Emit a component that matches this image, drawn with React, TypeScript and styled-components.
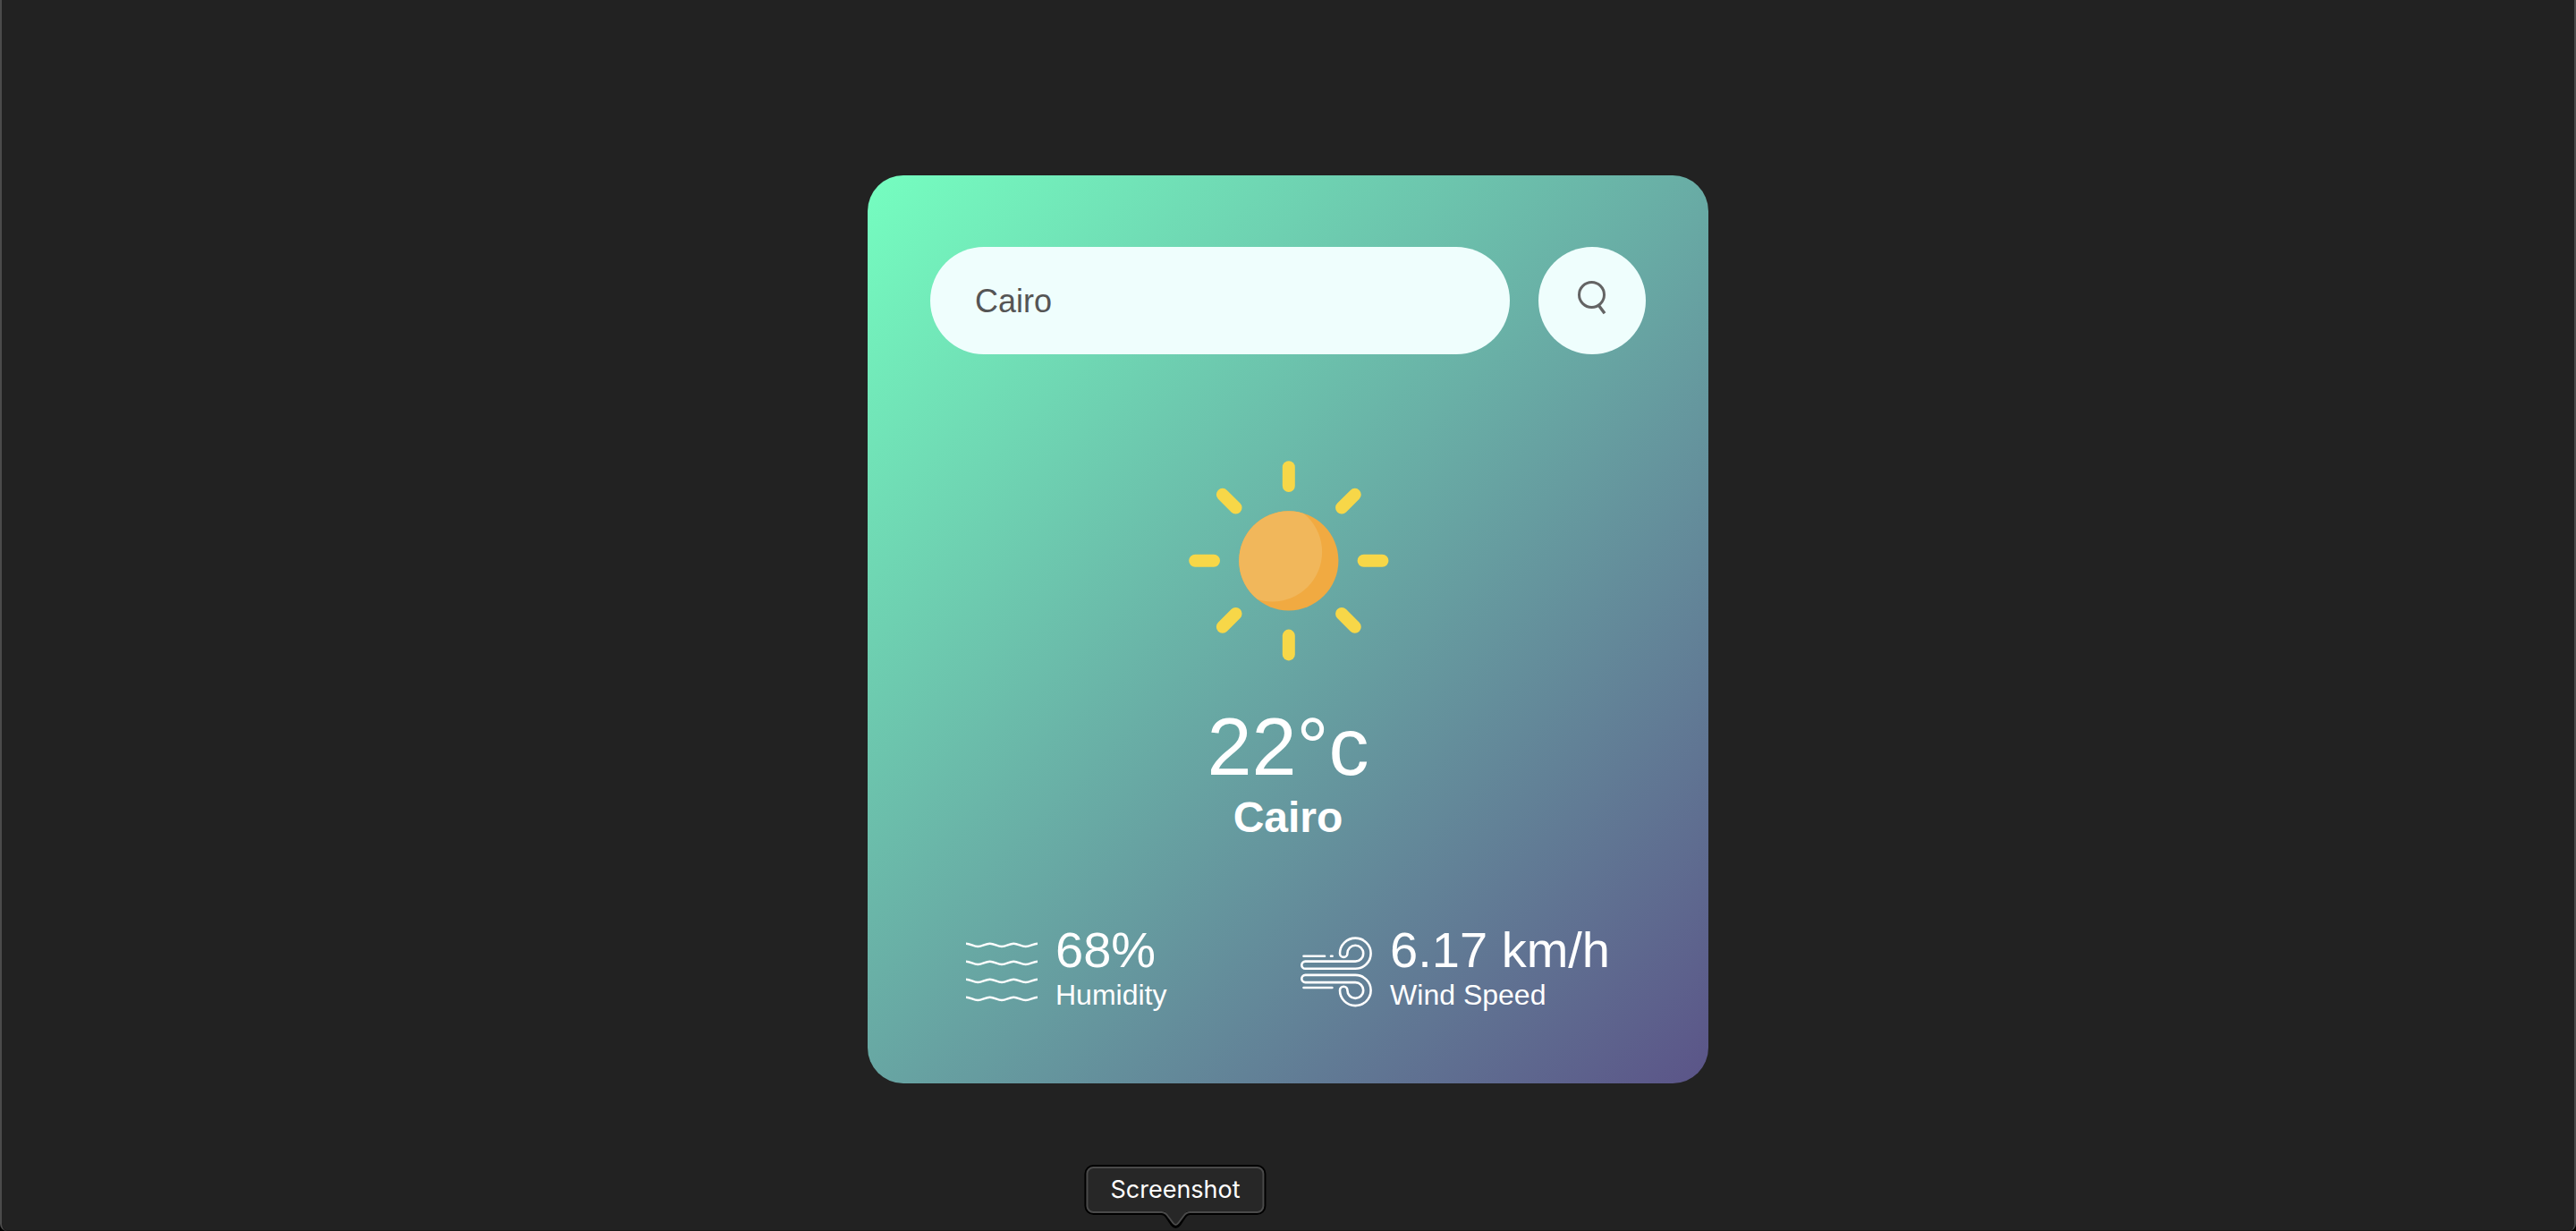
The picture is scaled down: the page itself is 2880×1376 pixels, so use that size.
import React, { useState } from "react";
import styled, { createGlobalStyle } from "styled-components";

const GlobalStyle = createGlobalStyle`
  * {
    margin: 0;
    padding: 0;
    box-sizing: border-box;
  }
  body {
    background: #000;
    font-family: Helvetica, "Liberation Sans", Arial, sans-serif;
  }
`;

const Page = styled.main`
  position: relative;
  min-height: 100vh;
  padding: 196px 20px 160px;
  background: #222;
  border: solid #4b4b4b;
  border-width: 0 2px;
  border-radius: 0 0 8px 8px;
  box-shadow: inset 0 -1px 0 #1b1819;
  overflow: hidden;
`;

const Card = styled.section`
  width: 100%;
  max-width: 940px;
  margin: 0 auto;
  padding: 80px 70px;
  border-radius: 40px;
  background: linear-gradient(135deg, #75fec0, #5b5488);
  color: #fff;
  text-align: center;
`;

const SearchForm = styled.form`
  display: flex;
  align-items: center;
  gap: 32px;
`;

const SearchInput = styled.input`
  flex: 1;
  min-width: 0;
  height: 120px;
  padding: 2px 50px 0;
  border: 0;
  outline: 0;
  border-radius: 60px;
  background: #effefd;
  color: #555;
  font: 36px Helvetica, "Liberation Sans", Arial, sans-serif;
`;

const SearchButton = styled.button`
  display: flex;
  align-items: center;
  justify-content: center;
  flex: none;
  width: 120px;
  height: 120px;
  border: 0;
  border-radius: 50%;
  background: #effefd;
  cursor: pointer;
`;

const Weather = styled.div`
  display: flex;
  flex-direction: column;
  align-items: center;
  padding-top: 60px;
`;

const Temperature = styled.h1`
  font-size: 90px;
  line-height: 102px;
  font-weight: 400;
`;

const City = styled.h2`
  font-size: 48px;
  line-height: 56px;
  font-weight: 700;
`;

const Details = styled.div`
  display: flex;
  align-items: center;
  justify-content: space-between;
  margin-top: 88px;
  padding: 0 40px;
`;

const Detail = styled.div`
  display: flex;
  align-items: flex-end;
  gap: 20px;
  text-align: left;
`;

const DetailIcon = styled.svg`
  flex: none;
  width: 80px;
  height: 80px;
  margin-bottom: 4px;
  fill: none;
  stroke: #fff;
  stroke-linecap: round;
`;

const DetailValue = styled.p`
  font-size: 56px;
  line-height: 64px;
`;

const DetailLabel = styled.p`
  font-size: 32px;
  line-height: 37px;
`;

const Tooltip = styled.div`
  position: absolute;
  left: calc(50% - 126px);
  bottom: 20px;
  transform: translateX(-50%);
  padding: 9px 25px;
  border: 2px solid #4a4a4a;
  border-radius: 8px;
  box-shadow: 0 0 0 2px #000;
  background: #272727;
  color: #fff;
  font: 27px/30px Inter, "Liberation Sans", sans-serif;
`;

const TooltipArrow = styled.svg`
  position: absolute;
  left: 50%;
  top: 100%;
  width: 36px;
  height: 20px;
  margin-left: -18px;
`;

const RAYS = [0, 45, 90, 135, 180, 225, 270, 315];
const WAVES = [7.7, 27.7, 47.7, 67.7];

const SearchIcon = () => (
  <svg width="32" height="44" viewBox="0 0 32 44" fill="none" stroke="#646464" strokeWidth="3" aria-hidden="true">
    <circle cx="15.5" cy="15.5" r="14" />
    <path d="M23.3 27.3L30 36.3" strokeWidth="3.4" />
  </svg>
);

const SunIcon = () => (
  <svg width="340" height="328" viewBox="0 0 340 328" role="img" aria-label="Clear">
    <defs>
      <clipPath id="sun-disc">
        <circle cx="170.8" cy="170.8" r="55.6" />
      </clipPath>
    </defs>
    <circle cx="170.8" cy="170.8" r="55.6" fill="#f1aa41" />
    <circle cx="152.5" cy="161" r="55.6" fill="#f1b75b" clipPath="url(#sun-disc)" />
    <g stroke="#f7d748" strokeWidth="14" strokeLinecap="round">
      {RAYS.map((angle) => (
        <path key={angle} d="M170.8 66.2V87" transform={`rotate(${angle} 170.8 170.8)`} />
      ))}
    </g>
  </svg>
);

const HumidityIcon = () => (
  <DetailIcon viewBox="0 0 80 80" strokeWidth="2.3" aria-hidden="true">
    {WAVES.map((y) => (
      <path
        key={y}
        strokeWidth="2.5"
        d={`M0 ${y}c4.9 0 8.5 3.3 13.3 3.3s8.5-3.3 13.4-3.3 8.5 3.3 13.3 3.3 8.5-3.3 13.3-3.3 8.5 3.3 13.4 3.3 8.5-3.3 13.3-3.3`}
      />
    ))}
  </DetailIcon>
);

const WindIcon = () => (
  <DetailIcon viewBox="0 0 80 80" strokeWidth="2.6" aria-hidden="true">
    <path d="M3.5 21.7H27M34 21.7H35.6M3.5 57H35.4" />
    <path d="M61.3 35.8H5.4A4.1 4.1 0 0 1 5.4 27.6H61.3A8.9 8.9 0 1 0 52.4 18.7A4.1 4.1 0 0 1 44 18.7A17.3 17.1 0 1 1 61.3 35.8Z" />
    <path d="M61.3 42.9H5.4A4.1 4.1 0 0 0 5.4 51.1H61.3A8.9 8.9 0 1 1 52.4 60A4.1 4.1 0 0 0 44 60A17.3 17.1 0 1 0 61.3 42.9Z" />
  </DetailIcon>
);

export default function App() {
  const [query, setQuery] = useState("Cairo");

  return (
    <>
      <GlobalStyle />
      <Page>
        <Card>
          <SearchForm onSubmit={(event: React.FormEvent) => event.preventDefault()}>
            <SearchInput
              type="text"
              aria-label="City name"
              spellCheck={false}
              value={query}
              onChange={(event: React.ChangeEvent<HTMLInputElement>) => setQuery(event.target.value)}
            />
            <SearchButton type="submit" aria-label="Search">
              <SearchIcon />
            </SearchButton>
          </SearchForm>
          <Weather>
            <SunIcon />
            <Temperature>22°c</Temperature>
            <City>Cairo</City>
          </Weather>
          <Details>
            <Detail>
              <HumidityIcon />
              <div>
                <DetailValue>68%</DetailValue>
                <DetailLabel>Humidity</DetailLabel>
              </div>
            </Detail>
            <Detail>
              <WindIcon />
              <div>
                <DetailValue>6.17 km/h</DetailValue>
                <DetailLabel>Wind Speed</DetailLabel>
              </div>
            </Detail>
          </Details>
        </Card>
        <Tooltip role="tooltip">
          Screenshot
          <TooltipArrow viewBox="0 0 36 20" aria-hidden="true">
            <path d="M2 1C5 1 7 2 9 5L15 14Q18 18 21 14L27 5C29 2 31 1 34 1" fill="none" stroke="#000" strokeWidth="6" />
            <path d="M2 -3V-1C5 -1 7 1 9 4L15 13Q18 17 21 13L27 4C29 1 31 -1 34 -1V-3Z" fill="#272727" />
            <path d="M0 1H2C5 1 7 2 9 5L15 13Q18 17 21 13L27 5C29 2 31 1 34 1H36" fill="none" stroke="#4a4a4a" strokeWidth="2" />
          </TooltipArrow>
        </Tooltip>
      </Page>
    </>
  );
}
